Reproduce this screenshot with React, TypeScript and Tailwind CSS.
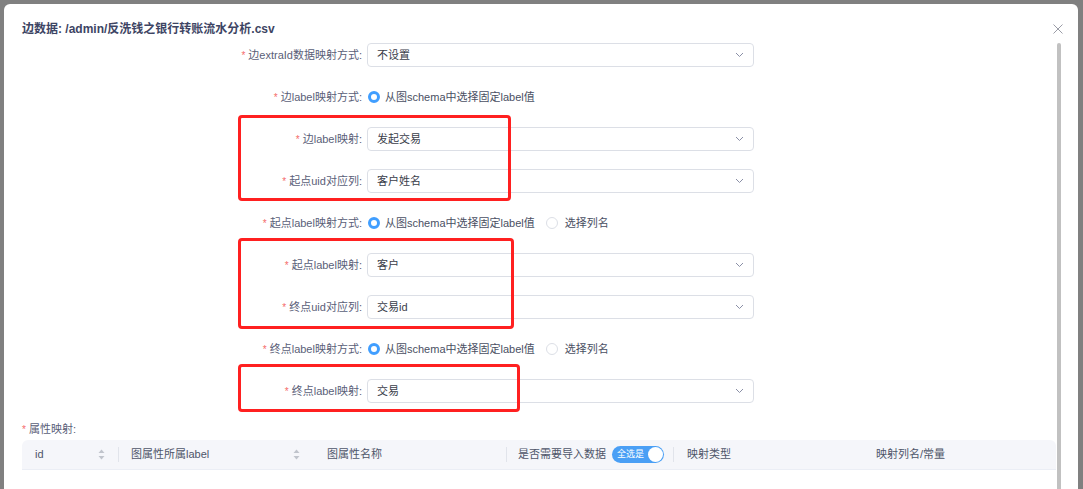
import React from "react";

const Star = () => <span className="text-[#f56c6c] text-[10px] mr-[3px] leading-none relative top-[1px]">*</span>;

const Chevron = () => (
  <svg width="9" height="6" viewBox="0 0 9 6" fill="none">
    <path d="M1 1l3.5 3.5L8 1" stroke="#8a8fa6" strokeWidth="1" />
  </svg>
);

const Label = ({ text }: { text: string }) => (
  <div className="w-[363px] pr-[5px] flex items-center justify-end text-[11px] text-[#5a6078]">
    <Star />
    <span>{text}:</span>
  </div>
);

const SelectRow = ({ label, value }: { label: string; value: string }) => (
  <div className="h-[24px] flex items-center">
    <Label text={label} />
    <div className="w-[387px] h-[24px] border border-[#dcdfe6] rounded-[4px] flex items-center justify-between pl-[9px] pr-[9px]">
      <span className="text-[11px] text-[#3a3d4a]">{value}</span>
      <Chevron />
    </div>
  </div>
);

const RadioRow = ({ label, two }: { label: string; two?: boolean }) => (
  <div className="h-[24px] flex items-center">
    <Label text={label} />
    <div className="flex items-center text-[11px] text-[#4a4f63]">
      <span className="ml-[1px] w-[12px] h-[12px] rounded-full border-[3.5px] border-[#409eff] bg-white" />
      <span className="ml-[5px]">从图schema中选择固定label值</span>
      {two && (
        <>
          <span className="ml-[11px] w-[12px] h-[12px] rounded-full border border-[#dcdfe6] bg-white" />
          <span className="ml-[7px]">选择列名</span>
        </>
      )}
    </div>
  </div>
);

const Sort = () => (
  <svg width="7" height="11" viewBox="0 0 7 11">
    <path d="M3.5 0.5L6.5 4H0.5z" fill="#c0c4cc" />
    <path d="M3.5 10.5L6.5 7H0.5z" fill="#c0c4cc" />
  </svg>
);

const Divider = () => <div className="w-px h-[15px] bg-[#e1e4eb]" />;

export default function App() {
  return (
    <div className="w-[1083px] h-[489px] bg-[#808080] overflow-hidden relative flex pt-[4px] pl-[4px] font-['Liberation_Sans','Noto_Sans_CJK_SC',sans-serif]">
      <div className="w-[1074px] h-[485px] bg-white rounded-t-[6px] relative overflow-hidden shrink-0">
        <div className="h-[39px] pl-[18px] pt-[16px]">
          <div className="text-[12px] leading-[18px] font-bold text-[#3d4463]">边数据: /admin/反洗钱之银行转账流水分析.csv</div>
        </div>
        <button className="absolute right-[15px] top-[20px] w-[10px] h-[10px]">
          <svg width="10" height="10" viewBox="0 0 10 10">
            <path d="M0.5 0.5l9 9M9.5 0.5l-9 9" stroke="#9a9ca6" strokeWidth="1" />
          </svg>
        </button>
        <div className="absolute left-[1053px] top-[39px] w-[4px] h-[460px] rounded-full bg-[#c1c1c1]" />

        <div className="flex flex-col gap-[18px]">
          <SelectRow label="边extraId数据映射方式" value="不设置" />
          <RadioRow label="边label映射方式" />
          <SelectRow label="边label映射" value="发起交易" />
          <SelectRow label="起点uid对应列" value="客户姓名" />
          <RadioRow label="起点label映射方式" two />
          <SelectRow label="起点label映射" value="客户" />
          <SelectRow label="终点uid对应列" value="交易id" />
          <RadioRow label="终点label映射方式" two />
          <SelectRow label="终点label映射" value="交易" />
        </div>

        <div className="mt-[18px] pl-[18px] h-[16px] flex items-center text-[11px] text-[#5a6078]">
          <Star />
          <span>属性映射:</span>
        </div>

        <div className="mt-[3px] ml-[18px] w-[1034px] h-[30px] bg-[#f5f6fa] rounded-t-[6px] border-b border-[#ebeef5] flex items-center text-[11px] text-[#4e5569]">
          <div className="w-[96px] flex items-center justify-between pl-[13px] pr-[13px]">
            <span>id</span>
            <Sort />
          </div>
          <Divider />
          <div className="w-[195px] flex items-center justify-between pl-[12px] pr-[14px]">
            <span>图属性所属label</span>
            <Sort />
          </div>
          <div className="w-[192px] pl-[13px]">图属性名称</div>
          <Divider />
          <div className="w-[166px] flex items-center pl-[11px]">
            <span className="whitespace-nowrap">是否需要导入数据</span>
            <div className="ml-[6px] w-[52px] h-[17px] shrink-0 rounded-full bg-[#4a9ff5] flex items-center justify-between pl-[5px] pr-[1px]">
              <span className="text-[9px] text-white leading-none whitespace-nowrap">全选是</span>
              <span className="w-[15px] h-[15px] shrink-0 rounded-full bg-white" />
            </div>
          </div>
          <Divider />
          <div className="w-[189px] pl-[13px]">映射类型</div>
          <div className="flex-1 pl-[13px]">映射列名/常量</div>
        </div>
      </div>

      <div className="absolute left-[238px] top-[115px] w-[273px] h-[86px] border-[3px] border-[#ff2020] rounded-[4px]" />
      <div className="absolute left-[238px] top-[238px] w-[276px] h-[91px] border-[3px] border-[#ff2020] rounded-[4px]" />
      <div className="absolute left-[238px] top-[364px] w-[282px] h-[48px] border-[3px] border-[#ff2020] rounded-[4px]" />
    </div>
  );
}
